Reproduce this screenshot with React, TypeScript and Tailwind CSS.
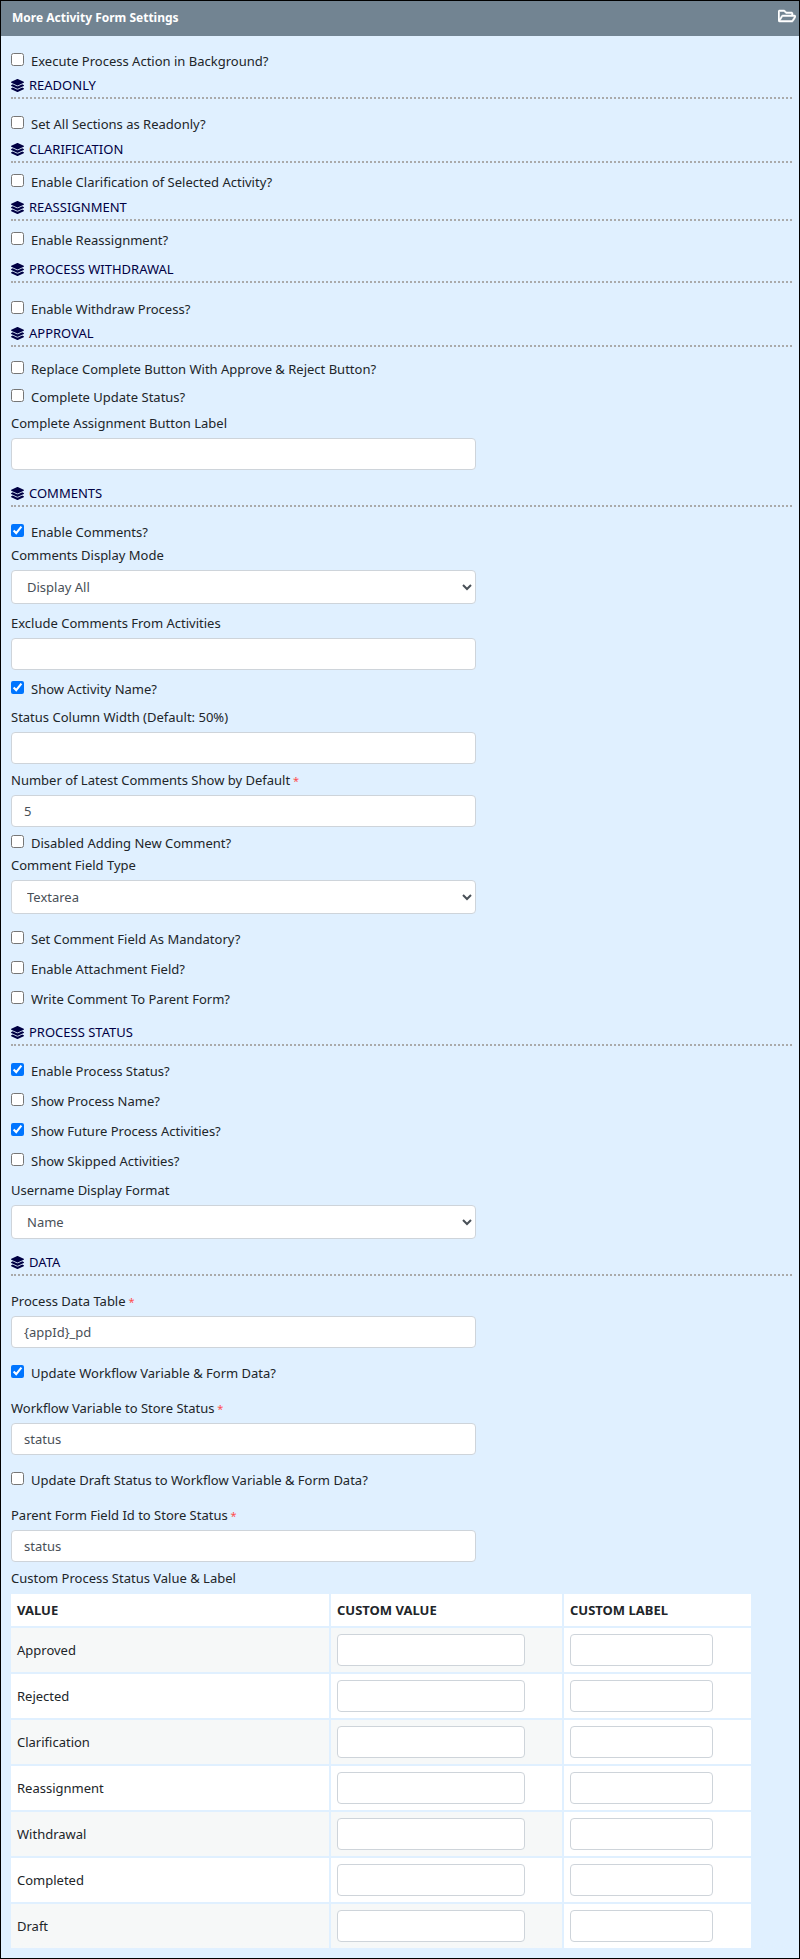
import { useId, useState } from "react";
import type { ReactNode } from "react";
import { FaLayerGroup, FaRegFolderOpen } from "react-icons/fa";

interface CheckProps {
  label: string;
  checked?: boolean;
}

function Check({ label, checked = false }: CheckProps) {
  const [value, setValue] = useState(checked);

  return (
    <label className="flex w-fit items-start gap-[7px] leading-5">
      <input
        type="checkbox"
        checked={value}
        onChange={(e) => setValue(e.target.checked)}
        className="mt-0.5 size-[13px] shrink-0"
      />
      {label}
    </label>
  );
}

interface FieldProps {
  label: string;
  value?: string;
  required?: boolean;
}

function FieldLabel({ id, label, required }: FieldProps & { id: string }) {
  return (
    <label htmlFor={id} className="block leading-5">
      {label}
      {required && <span className="text-[11px] leading-none text-[#ff4d4d]"> *</span>}
    </label>
  );
}

function TextField({ label, value = "", required }: FieldProps) {
  const id = useId();

  return (
    <div className="max-w-[465px]">
      <FieldLabel id={id} label={label} required={required} />
      <input
        id={id}
        type="text"
        defaultValue={value}
        className="mt-[5px] block h-8 w-full rounded border border-[#ced4da] bg-white px-3 text-[#495057]"
      />
    </div>
  );
}

function SelectField({ label, options }: { label: string; options: string[] }) {
  const id = useId();

  return (
    <div className="max-w-[465px]">
      <FieldLabel id={id} label={label} />
      <select
        id={id}
        className="mt-[5px] block h-[34px] w-full rounded border border-[#ced4da] bg-white pl-[11px] text-[#495057]"
      >
        {options.map((option) => (
          <option key={option}>{option}</option>
        ))}
      </select>
    </div>
  );
}

function SectionTitle({ children }: { children: ReactNode }) {
  return (
    <h2 className="flex items-center gap-[5px] border-b-2 border-dotted border-[#aaaaaa] pb-0.5 leading-5 text-[#000044]">
      <FaLayerGroup className="size-[13px]" />
      {children}
    </h2>
  );
}

const statuses = [
  "Approved",
  "Rejected",
  "Clarification",
  "Reassignment",
  "Withdrawal",
  "Completed",
  "Draft",
];

function StatusTable() {
  const cell = "border-r-2 border-b-2 border-[#e0f0ff] px-1.5";
  const input =
    "block h-8 max-w-full rounded border border-[#ced4da] bg-white px-3 text-[#495057]";

  return (
    <table className="w-[95%] table-fixed border-separate border-spacing-0 text-left">
      <thead>
        <tr className="h-[34px] bg-white">
          <th className={`${cell} w-[320px] font-bold`}>VALUE</th>
          <th className={`${cell} w-[233px] font-bold`}>CUSTOM VALUE</th>
          <th className={`${cell} font-bold`}>CUSTOM LABEL</th>
        </tr>
      </thead>
      <tbody>
        {statuses.map((status) => (
          <tr key={status} className="group h-[46px]">
            <td className={`${cell} bg-white group-odd:bg-[#f6f8f8]`}>{status}</td>
            <td className={`${cell} bg-white group-odd:bg-[#f6f8f8]`}>
              <input
                type="text"
                aria-label={`${status} custom value`}
                className={`${input} w-[188px]`}
              />
            </td>
            <td className={`${cell} bg-white`}>
              <input
                type="text"
                aria-label={`${status} custom label`}
                className={`${input} w-[143px]`}
              />
            </td>
          </tr>
        ))}
      </tbody>
    </table>
  );
}

export default function App() {
  return (
    <div className="border border-black bg-[#e0f0ff] font-['Noto_Sans',sans-serif] text-[13px] leading-5 text-[#212529]">
      <header className="flex h-[35px] items-start justify-between bg-[#728492] pt-[7px] pr-[3px] pl-[11px] text-white">
        <h1 className="text-[12px] leading-5 font-bold">More Activity Form Settings</h1>
        <button type="button" aria-label="Open settings" className="cursor-pointer">
          <FaRegFolderOpen className="h-4 w-[18px]" stroke="currentColor" strokeWidth={16} />
        </button>
      </header>

      <form className="pt-[15px] pr-[7px] pb-2 pl-2.5">
        <Check label="Execute Process Action in Background?" />

        {/* Readonly */}
        <section className="mt-1">
          <SectionTitle>READONLY</SectionTitle>
          <div className="mt-[15px]">
            <Check label="Set All Sections as Readonly?" />
          </div>
        </section>

        {/* Clarification */}
        <section className="mt-[5px]">
          <SectionTitle>CLARIFICATION</SectionTitle>
          <div className="mt-[9px]">
            <Check label="Enable Clarification of Selected Activity?" />
          </div>
        </section>

        {/* Reassignment */}
        <section className="mt-[5px]">
          <SectionTitle>REASSIGNMENT</SectionTitle>
          <div className="mt-[9px]">
            <Check label="Enable Reassignment?" />
          </div>
        </section>

        {/* Process withdrawal */}
        <section className="mt-[9px]">
          <SectionTitle>PROCESS WITHDRAWAL</SectionTitle>
          <div className="mt-4">
            <Check label="Enable Withdraw Process?" />
          </div>
        </section>

        {/* Approval */}
        <section className="mt-1">
          <SectionTitle>APPROVAL</SectionTitle>
          <div className="mt-3 mb-1.5 flex flex-col gap-2">
            <Check label="Replace Complete Button With Approve & Reject Button?" />
            <Check label="Complete Update Status?" />
          </div>
          <TextField label="Complete Assignment Button Label" />
        </section>

        {/* Comments */}
        <section className="mt-[13px]">
          <SectionTitle>COMMENTS</SectionTitle>
          <div className="mt-[15px] flex flex-col gap-[3px]">
            <Check label="Enable Comments?" checked />
            <SelectField label="Comments Display Mode" options={["Display All", "Display Latest"]} />
          </div>
          <div className="mt-[9px] flex flex-col gap-[9px]">
            <TextField label="Exclude Comments From Activities" />
            <Check label="Show Activity Name?" checked />
          </div>
          <div className="mt-2 flex flex-col gap-1.5">
            <TextField label="Status Column Width (Default: 50%)" />
            <TextField label="Number of Latest Comments Show by Default" value="5" required />
            <Check label="Disabled Adding New Comment?" />
          </div>
          <div className="mt-0.5">
            <SelectField label="Comment Field Type" options={["Textarea", "Rich Text Editor"]} />
          </div>
          <div className="mt-[15px] flex flex-col gap-2.5">
            <Check label="Set Comment Field As Mandatory?" />
            <Check label="Enable Attachment Field?" />
            <Check label="Write Comment To Parent Form?" />
          </div>
        </section>

        {/* Process status */}
        <section className="mt-[13px]">
          <SectionTitle>PROCESS STATUS</SectionTitle>
          <div className="mt-[15px] mb-[9px] flex flex-col gap-2.5">
            <Check label="Enable Process Status?" checked />
            <Check label="Show Process Name?" />
            <Check label="Show Future Process Activities?" checked />
            <Check label="Show Skipped Activities?" />
          </div>
          <SelectField label="Username Display Format" options={["Name", "Username"]} />
        </section>

        {/* Data */}
        <section className="mt-[13px]">
          <SectionTitle>DATA</SectionTitle>
          <div className="mt-[15px] mb-1.5 flex flex-col gap-[15px]">
            <TextField label="Process Data Table" value="{appId}_pd" required />
            <Check label="Update Workflow Variable & Form Data?" checked />
            <TextField label="Workflow Variable to Store Status" value="status" required />
            <Check label="Update Draft Status to Workflow Variable & Form Data?" />
            <TextField label="Parent Form Field Id to Store Status" value="status" required />
          </div>
          <p className="mb-1.5 leading-5">Custom Process Status Value & Label</p>
          <StatusTable />
        </section>
      </form>
    </div>
  );
}
